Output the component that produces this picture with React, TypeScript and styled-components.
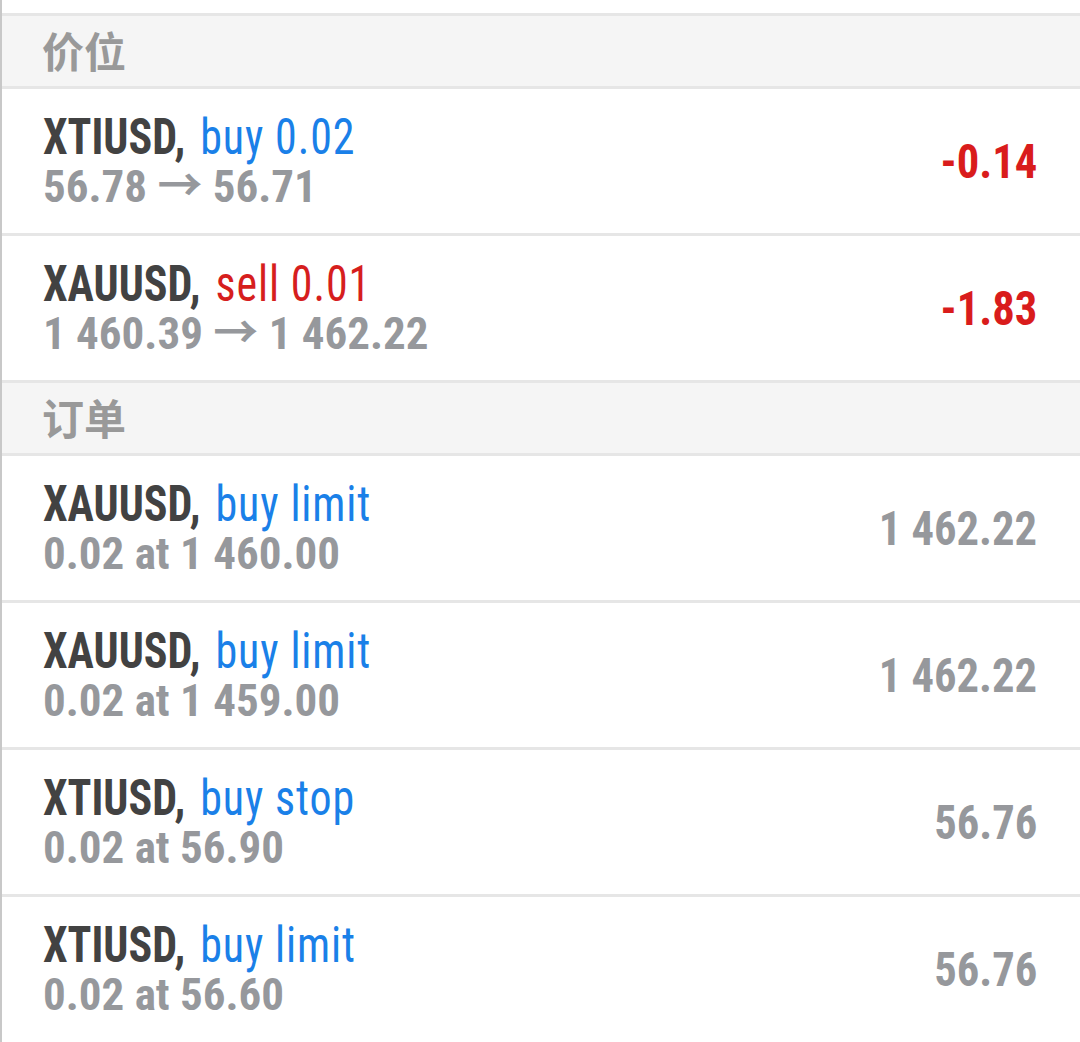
import styled, { createGlobalStyle } from "styled-components";

const GlobalStyle = createGlobalStyle`
  html, body {
    margin: 0;
    padding: 0;
    background: #ffffff;
  }
  body {
    font-family: "Roboto Condensed", Roboto, "Noto Sans CJK SC", sans-serif;
  }
`;

type Trade = {
  symbol: string;
  action: string;
  side: "buy" | "sell";
  detail: string;
  value: string;
  loss?: boolean;
};

const positions: Trade[] = [
  { symbol: "XTIUSD", action: "buy 0.02", side: "buy", detail: "56.78 → 56.71", value: "-0.14", loss: true },
  { symbol: "XAUUSD", action: "sell 0.01", side: "sell", detail: "1 460.39 → 1 462.22", value: "-1.83", loss: true },
];

const orders: Trade[] = [
  { symbol: "XAUUSD", action: "buy limit", side: "buy", detail: "0.02 at 1 460.00", value: "1 462.22" },
  { symbol: "XAUUSD", action: "buy limit", side: "buy", detail: "0.02 at 1 459.00", value: "1 462.22" },
  { symbol: "XTIUSD", action: "buy stop", side: "buy", detail: "0.02 at 56.90", value: "56.76" },
  { symbol: "XTIUSD", action: "buy limit", side: "buy", detail: "0.02 at 56.60", value: "56.76" },
];

function TradeRow({ trade }: { trade: Trade }) {
  return (
    <Row>
      <Info>
        <Title>
          <Symbol>{trade.symbol},</Symbol>
          <Action side={trade.side}>{trade.action}</Action>
        </Title>
        <Detail>{trade.detail}</Detail>
      </Info>
      <Value loss={trade.loss}>{trade.value}</Value>
    </Row>
  );
}

function App() {
  return (
    <>
      <GlobalStyle />
      <Page>
        <SectionHeader>价位</SectionHeader>
        {positions.map((t, i) => (
          <TradeRow key={"p" + i} trade={t} />
        ))}
        <SectionHeader>订单</SectionHeader>
        {orders.map((t, i) => (
          <TradeRow key={"o" + i} trade={t} />
        ))}
      </Page>
    </>
  );
}

const Page = styled.div`
  min-height: 1042px;
  box-sizing: border-box;
  padding-top: 13px;
  border-left: 2px solid #c8c8c8;
  background: #ffffff;
`;

const SectionHeader = styled.div`
  height: 66px;
  display: flex;
  align-items: center;
  padding: 0 0 4px 40px;
  border-top: 3px solid #e6e6e6;
  background: #f5f5f5;
  color: #999999;
  font-family: "Noto Sans CJK SC", sans-serif;
  font-size: 42px;
  font-weight: 700;
`;

const Row = styled.div`
  height: 144px;
  display: flex;
  align-items: center;
  justify-content: space-between;
  padding: 0 43px 0 41px;
  border-top: 3px solid #e6e6e6;
`;

const Info = styled.div`
  display: flex;
  flex-direction: column;
`;

/* no condensed face installed, so narrow Roboto a little */
const Title = styled.div`
  font-size: 50px;
  line-height: 52px;
  white-space: nowrap;
  transform: scaleX(0.88);
  transform-origin: left center;
`;

const Symbol = styled.span`
  color: #424242;
  font-weight: 700;
`;

const Action = styled.span<{ side: "buy" | "sell" }>`
  margin-left: 17px;
  letter-spacing: 1px;
  color: ${(props) => (props.side === "buy" ? "#1a80e8" : "#d61e1e")};
  font-weight: 400;
`;

const Detail = styled.div`
  font-size: 45px;
  line-height: 48px;
  font-weight: 700;
  color: #96989c;
  white-space: nowrap;
`;

const Value = styled.div<{ loss?: boolean }>`
  font-size: 49px;
  font-weight: 700;
  color: ${(props) => (props.loss ? "#d91c1c" : "#96989c")};
  white-space: nowrap;
  transform: scaleX(0.91);
  transform-origin: right center;
`;

export default App;
